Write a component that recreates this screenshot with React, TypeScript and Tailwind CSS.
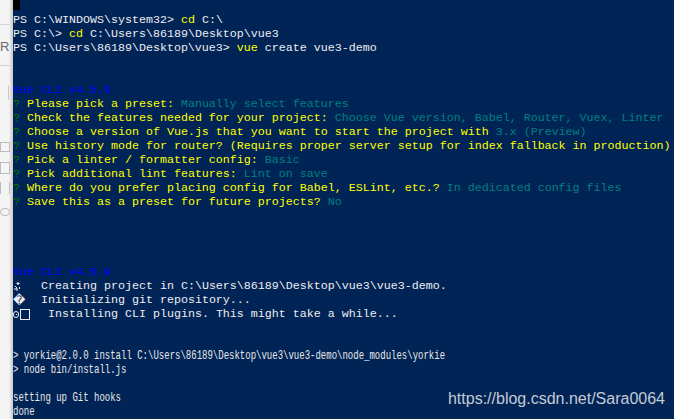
import React from 'react';

type Seg = { t: string; c?: string };
type Line = Seg[];

const W = 'text-[#eeedf0]';
const Y = 'text-[#ffff00]';
const G = 'text-[#008000]';
const T = 'text-[#008080]';
const B = 'text-[#0000ff]';

const q = (prompt: string, answer: string): Line => [
  { t: '? ', c: G },
  { t: prompt, c: Y },
  { t: answer, c: T },
];

const topLines: Line[] = [
  [{ t: 'PS C:\\WINDOWS\\system32> ', c: W }, { t: 'cd', c: Y }, { t: ' C:\\', c: W }],
  [{ t: 'PS C:\\> ', c: W }, { t: 'cd', c: Y }, { t: ' C:\\Users\\86189\\Desktop\\vue3', c: W }],
  [{ t: 'PS C:\\Users\\86189\\Desktop\\vue3> ', c: W }, { t: 'vue', c: Y }, { t: ' create vue3-demo', c: W }],
  [],
  [],
  [{ t: 'Vue CLI v4.5.9', c: B }],
  q('Please pick a preset: ', 'Manually select features'),
  q('Check the features needed for your project: ', 'Choose Vue version, Babel, Router, Vuex, Linter'),
  q('Choose a version of Vue.js that you want to start the project with ', '3.x (Preview)'),
  q('Use history mode for router? (Requires proper server setup for index fallback in production)', ''),
  q('Pick a linter / formatter config: ', 'Basic'),
  q('Pick additional lint features: ', 'Lint on save'),
  q('Where do you prefer placing config for Babel, ESLint, etc.? ', 'In dedicated config files'),
  q('Save this as a preset for future projects? ', 'No'),
  [],
  [],
  [],
  [],
  [{ t: 'Vue CLI v4.5.9', c: B }],
];

const npmLines = [
  '> yorkie@2.0.0 install C:\\Users\\86189\\Desktop\\vue3\\vue3-demo\\node_modules\\yorkie',
  '> node bin/install.js',
  '',
  'setting up Git hooks',
  'done',
];

function Sparkle() {
  return (
    <svg width="9" height="11" viewBox="0 0 9 11" className="mt-[2px]">
      <path d="M5 1v3M3.5 2.5h3M2 5l2 2M1 8h3M4 7v3M6.5 6v2" stroke="#eeedf0" strokeWidth="1" fill="none" />
      <circle cx="5" cy="2.5" r="0.8" fill="#eeedf0" />
    </svg>
  );
}

function TextLine({ line }: { line: Line }) {
  return (
    <div className="h-[14px] leading-[14px] whitespace-pre">
      {line.map((s, i) => (
        <span key={i} className={s.c}>
          {s.t}
        </span>
      ))}
    </div>
  );
}

function LeftStrip() {
  return (
    <div className="relative w-[13px] shrink-0 bg-[#f4f4f4] border-r border-[#d0d0d0]">
      <div className="flex flex-col pt-[24px]">
        <div className="h-px w-[10px] bg-[#d8d8d8]" />
        <div className="h-[18px] mt-[13px] text-[13px] leading-[18px] text-[#666] font-['Liberation_Sans',sans-serif]">R</div>
        <div className="h-px w-[10px] mt-[9px] bg-[#d0d0d0]" />
        <div className="h-[14px] w-px ml-[8px] mt-[20px] bg-[#c8c8c8]" />
        <div className="h-[10px] w-[10px] mt-[42px] border border-[#bbb]" />
        <div className="h-[12px] w-[10px] mt-[10px] border border-[#bbb]" />
        <div className="h-[12px] w-[10px] mt-[8px] border-x border-[#bbb]" />
        <div className="h-[8px] w-[10px] mt-[14px] rounded-full border border-[#bbb]" />
      </div>
      <div className="absolute inset-y-0 right-0 w-[3px] bg-gradient-to-r from-transparent to-[#cfcfcf]" />
    </div>
  );
}

export default function App() {
  return (
    <div className="flex w-[674px] h-[419px] overflow-hidden">
      <LeftStrip />
      <div className="relative flex-1 bg-[#012456] font-['Liberation_Mono',monospace] text-[11.67px] text-[#eeedf0]">
        <div className="-mt-px flex flex-col">
          <div className="h-[14px] pt-px">
            <div className="w-[7px] h-[10px] bg-black" />
          </div>
          {topLines.map((l, i) => (
            <TextLine key={i} line={l} />
          ))}
          <div className="h-[14px] flex items-start">
            <div className="w-[28px] flex"><Sparkle /></div>
            <span className="leading-[14px] whitespace-pre">Creating project in C:\Users\86189\Desktop\vue3\vue3-demo.</span>
          </div>
          <div className="h-[14px] flex items-start">
            <div className="w-[28px] leading-[14px] text-[12px] font-['DejaVu_Sans',sans-serif]">{'\uFFFD'}</div>
            <span className="leading-[14px] whitespace-pre">Initializing git repository...</span>
          </div>
          <div className="h-[14px] flex items-center">
            <div className="w-[35px] flex items-center gap-[1px]">
              <div className="w-[6px] h-[7px] rounded-full border border-[#eeedf0] flex items-center justify-center">
                <div className="w-px h-px bg-[#eeedf0]" />
              </div>
              <div className="w-[10px] h-[11px] border border-[#eeedf0]" />
            </div>
            <span className="leading-[14px] whitespace-pre">Installing CLI plugins. This might take a while...</span>
          </div>
          <div className="h-[14px]" />
          <div className="h-[14px]" />
          <div className="text-[12px] text-[#e8e8e8]">
            {npmLines.map((t, i) => (
              <div key={i} className="h-[14px] leading-[14px] whitespace-pre origin-left scale-x-[0.75]">
                {t}
              </div>
            ))}
          </div>
        </div>
        <div className="absolute right-[9px] top-[389px] font-['Liberation_Sans',sans-serif] text-[16px] leading-[20px] text-[#c3cad6]">
          https://blog.csdn.net/Sara0064
        </div>
      </div>
    </div>
  );
}
